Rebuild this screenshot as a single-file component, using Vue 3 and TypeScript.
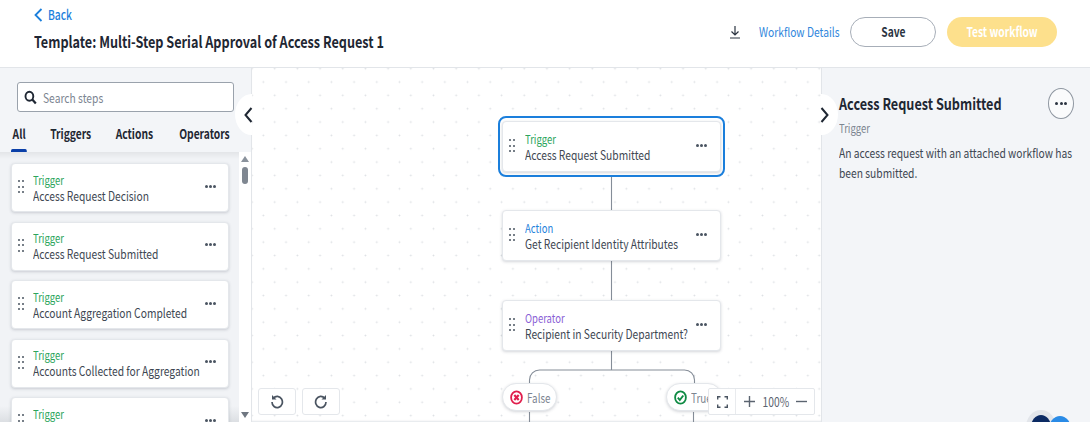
<template>
  <div class="page">
    <header class="topbar">
      <div class="title-block">
        <a class="back">
          <svg width="9" height="14" viewBox="0 0 9 14"><path d="M7.500 1 1.500 7l6 6" fill="none" stroke="#1b7fdc" stroke-width="1.800" /></svg>
          <span class="sq">Back</span>
        </a>
        <h1 class="sq">Template: Multi-Step Serial Approval of Access Request 1</h1>
      </div>
      <div class="top-actions">
        <svg class="download" width="12" height="13" viewBox="0 0 12 13"><path d="M6 0v8.500M2.500 5.500 6 9l3.500-3.500M1 12h10" fill="none" stroke="#2b3441" stroke-width="1.200" /></svg>
        <a class="details sq">Workflow Details</a>
        <button class="btn-save"><span class="sq-c">Save</span></button>
        <button class="btn-test"><span class="sq-c">Test workflow</span></button>
      </div>
    </header>

    <main class="workspace">
      <aside class="steps">
        <div class="steps-head">
          <div class="search">
            <svg width="13" height="15" viewBox="0 0 13 15"><ellipse cx="5.400" cy="6.200" rx="3.900" ry="4.500" fill="none" stroke="#1f2733" stroke-width="1.900" /><path d="m8.300 9.500 3.500 4" stroke="#1f2733" stroke-width="2.200" /></svg>
            <span class="sq">Search steps</span>
          </div>
          <nav class="tabs">
            <span v-for="tab in tabs" :key="tab" class="tab" :class="{ active: tab === 'All' }">{{ tab }}</span>
          </nav>
        </div>
        <div class="list-wrap">
          <div class="list">
            <div v-for="step in steps" :key="step" class="step-card">
              <span class="grip"><i v-for="n in 6" :key="n" /></span>
              <div class="card-text sq">
                <div class="kind trigger">Trigger</div>
                <div class="name">{{ step }}</div>
              </div>
              <span class="more"><i /><i /><i /></span>
            </div>
          </div>
          <div class="scrollbar">
            <span class="arrow up" />
            <span class="thumb" />
            <span class="arrow down" />
          </div>
        </div>
      </aside>

      <section class="canvas">
        <button class="toggle toggle-left">
          <svg width="9" height="16" viewBox="0 0 9 16"><path d="M7.500 1 1.500 8l6 7" fill="none" stroke="#1f2733" stroke-width="2" /></svg>
        </button>

        <svg class="wires" width="569" height="354" viewBox="0 0 569 354">
          <path d="M359.500 104V142M359.500 193V232M359.500 282V302M277.500 316V312a10 10 0 0 1 10-10H432.500a10 10 0 0 1 10 10V316M277.500 344V354M441.500 344V354" fill="none" stroke="#858d98" stroke-width="1.100" />
        </svg>

        <div class="selected-ring" />
        <div v-for="node in nodes" :key="node.name" class="step-card node" :style="{ top: node.top + 'px' }">
          <span class="grip"><i v-for="n in 6" :key="n" /></span>
          <div class="card-text sq">
            <div class="kind" :class="node.kind.toLowerCase()">{{ node.kind }}</div>
            <div class="name">{{ node.name }}</div>
          </div>
          <span class="more"><i /><i /><i /></span>
        </div>

        <div class="pill pill-false">
          <svg width="13" height="15" viewBox="0 0 13 15"><ellipse cx="6.500" cy="7.500" rx="5.400" ry="6.200" fill="none" stroke="#e01e4c" stroke-width="1.800" /><path d="m4.300 5 4.400 5m0-5-4.400 5" stroke="#e01e4c" stroke-width="2.100" /></svg>
          <span class="sq">False</span>
        </div>
        <div class="pill pill-true">
          <svg width="13" height="15" viewBox="0 0 13 15"><ellipse cx="6.500" cy="7.500" rx="5.400" ry="6.200" fill="none" stroke="#0e8a43" stroke-width="1.800" /><path d="m3.800 7.700 2 2.300 3.500-4.500" fill="none" stroke="#0e8a43" stroke-width="1.900" /></svg>
          <span class="sq">True</span>
        </div>

        <div class="history">
          <button>
            <svg width="14" height="15" viewBox="0 0 14 15"><path d="M3.300 4.300A5.200 5.600 0 1 1 2 8" fill="none" stroke="#4a5461" stroke-width="1.700" /><path d="M2 1v4.500h4.500z" fill="#4a5461" /></svg>
          </button>
          <button>
            <svg width="14" height="15" viewBox="0 0 14 15"><path d="M10.700 4.300A5.200 5.600 0 1 0 12 8" fill="none" stroke="#4a5461" stroke-width="1.700" /><path d="M12 1v4.500H7.500z" fill="#4a5461" /></svg>
          </button>
        </div>

        <div class="zoom-bar">
          <span class="fit">
            <svg width="11" height="12" viewBox="0 0 11 12"><path d="M.7 3.500V.7h2.800M7.500.7h2.800v2.800M10.300 8.500v2.800H7.500M3.500 11.300H.7V8.500" fill="none" stroke="#4a5461" stroke-width="1.400" /></svg>
          </span>
          <span class="zoom-controls">
            <svg width="11" height="11" viewBox="0 0 11 11"><path d="M5.500 0v11M0 5.500h11" stroke="#5b6470" stroke-width="1.400" /></svg>
            <span class="pct sq-c">100%</span>
            <svg width="11" height="11" viewBox="0 0 11 11"><path d="M0 5.500h11" stroke="#5b6470" stroke-width="1.400" /></svg>
          </span>
        </div>
      </section>

      <aside class="inspector">
        <button class="toggle toggle-right">
          <svg width="9" height="16" viewBox="0 0 9 16"><path d="M1.500 1 7.500 8l-6 7" fill="none" stroke="#1f2733" stroke-width="2" /></svg>
        </button>
        <div class="inspector-head">
          <h2 class="sq">Access Request Submitted</h2>
          <span class="more-round"><i /><i /><i /></span>
        </div>
        <div class="sub sq">Trigger</div>
        <p class="sq">An access request with an attached workflow has been submitted.</p>
        <div class="chat">
          <span class="chat-dark" />
          <span class="chat-blue" />
        </div>
      </aside>
    </main>
  </div>
</template>

<script setup lang="ts">
const tabs: string[] = ['All', 'Triggers', 'Actions', 'Operators']

// last card is cut off by the window, only its label shows
const steps: string[] = [
  'Access Request Decision',
  'Access Request Submitted',
  'Account Aggregation Completed',
  'Accounts Collected for Aggregation',
  '',
]

const nodes = [
  { kind: 'Trigger', name: 'Access Request Submitted', top: 53 },
  { kind: 'Action', name: 'Get Recipient Identity Attributes', top: 142 },
  { kind: 'Operator', name: 'Recipient in Security Department?', top: 232 },
]
</script>

<style>
html,
body {
  margin: 0;
  overflow: hidden;
}
</style>

<style scoped>
.page {
  width: 1090px;
  height: 422px;
  display: flex;
  flex-direction: column;
  overflow: hidden;
  background: #fff;
  font-family: "Noto Sans CJK SC", "Noto Sans", sans-serif;
  color: #2b3441;
}
/* the design's type is narrow, squeeze it horizontally */
.sq {
  display: block;
  transform: scaleX(0.79);
  transform-origin: left center;
  white-space: nowrap;
}
.sq-c {
  display: inline-block;
  transform: scaleX(0.79);
  white-space: nowrap;
}
.topbar {
  height: 68px;
  flex: none;
  display: flex;
  justify-content: space-between;
  box-sizing: border-box;
  padding: 0 33px 0 34px;
  border-bottom: 1px solid #e2e5e9;
}
.title-block {
  padding-top: 6px;
}
.back {
  display: flex;
  align-items: center;
  gap: 5px;
  height: 17px;
  font-size: 13px;
  font-weight: 500;
  color: #1b7fdc;
}
h1 {
  margin: 7px 0 0;
  font-size: 16px;
  line-height: 22px;
  font-weight: 700;
  color: #1f2733;
}
.top-actions {
  display: flex;
  align-items: center;
  height: 64px;
}
.download {
  margin-right: 18px;
}
.details {
  width: 80px;
  font-size: 13px;
  line-height: 17px;
  margin-top: -2px;
  color: #2f86dc;
  margin-right: 11px;
}
.btn-save,
.btn-test {
  height: 30px;
  border-radius: 15px;
  font: inherit;
  font-size: 13px;
  font-weight: 700;
  padding: 0 0 2px;
}
.btn-save {
  width: 86px;
  background: #fff;
  border: 1px solid #a7aeb8;
  color: #2b3441;
  margin-right: 11px;
}
.btn-test {
  width: 110px;
  background: #fde08c;
  border: 0;
  color: #fff;
}
.workspace {
  flex: 1;
  min-height: 0;
  display: flex;
}
.steps {
  width: 252px;
  flex: none;
  display: flex;
  flex-direction: column;
  background: #f3f5f8;
  border-right: 1px solid #e2e5e9;
  box-sizing: border-box;
}
.steps-head {
  padding: 14px 0 0 11px;
  flex: none;
}
.search {
  width: 217px;
  height: 30px;
  margin-left: 6px;
  box-sizing: border-box;
  display: flex;
  align-items: center;
  gap: 6px;
  padding-left: 6px;
  background: #fff;
  border: 1px solid #9aa2ac;
  border-radius: 3px;
  font-size: 13px;
  color: #7c8591;
}
.tabs {
  display: flex;
  margin-top: 14px;
  height: 26px;
  font-size: 13px;
  font-weight: 700;
  color: #1f2733;
  transform: scaleX(0.79);
  transform-origin: left center;
}
.tab {
  position: relative;
  margin-left: 31px;
  line-height: 16px;
}
.tab:first-child {
  margin-left: 2px;
}
.tab:last-child {
  margin-left: 33px;
}
.tab.active::after {
  content: "";
  position: absolute;
  left: -2px;
  bottom: 0;
  width: 20px;
  height: 3px;
  border-radius: 2px 2px 0 0;
  background: #0a3fa8;
}
.list-wrap {
  flex: 1;
  min-height: 0;
  display: flex;
  overflow: hidden;
  background: linear-gradient(#e3e5e8, #f1f3f6 7px, #f1f3f6 calc(100% - 16px), #dcdfe3);
}
.list {
  flex: 1;
  min-width: 0;
  padding: 11px 10px 0 11px;
  display: flex;
  flex-direction: column;
  gap: 9.500px;
}
.step-card {
  flex: none;
  display: flex;
  align-items: center;
  height: 49px;
  box-sizing: border-box;
  padding: 0 12px 0 6px;
  background: #fff;
  border: 1px solid #e4e7eb;
  border-radius: 4px;
  box-shadow: 0 1px 3px rgba(60, 70, 85, 0.22);
}
.grip {
  flex: none;
  display: grid;
  grid-template-columns: 2px 2px;
  gap: 3.500px 1.500px;
  margin-right: 9px;
  margin-top: -2px;
}
.grip i {
  width: 2px;
  height: 2px;
  background: #4a5461;
  border-radius: 50%;
}
.card-text {
  flex: 1;
  min-width: 0;
}
.kind {
  font-size: 12px;
  line-height: 15px;
}
.trigger {
  color: #2ca55c;
}
.action {
  color: #1f82db;
}
.operator {
  color: #8a5fd6;
}
.name {
  min-height: 17px;
  font-size: 13px;
  line-height: 17px;
  color: #3e4752;
}
.more {
  flex: none;
  display: flex;
  gap: 1px;
  margin-top: -3px;
}
.more i {
  width: 3px;
  height: 3px;
  border-radius: 50%;
  background: #4a5461;
}
.scrollbar {
  width: 12px;
  flex: none;
  position: relative;
  background: #fff;
}
.thumb {
  position: absolute;
  top: 15px;
  left: 3px;
  width: 6px;
  height: 17px;
  border-radius: 3px;
  background: #7f8791;
}
.arrow {
  position: absolute;
  left: 2px;
  width: 0;
  height: 0;
  border-left: 4px solid transparent;
  border-right: 4px solid transparent;
}
.arrow.up {
  top: 4px;
  border-bottom: 6px solid #8a929c;
}
.arrow.down {
  bottom: 4px;
  border-top: 6px solid #6f7781;
}
.canvas {
  flex: 1;
  position: relative;
  min-width: 0;
  background-color: #fff;
  background-image: radial-gradient(circle, #dde0e4 0.8px, transparent 1.1px), radial-gradient(circle, #dde0e4 0.8px, transparent 1.1px);
  background-size: 22.7px 26.7px;
  background-position: 0 0.7px, 11.35px 14px;
  box-shadow: inset 0 -2px 2px -1px #e2e5e9;
}
.toggle {
  position: absolute;
  top: 26px;
  width: 17px;
  height: 41px;
  padding: 0;
  border: 0;
  background: #fff;
  display: flex;
  align-items: center;
  z-index: 2;
}
.toggle-left {
  left: -17px;
  justify-content: flex-end;
  border-radius: 17px 0 0 17px / 21px 0 0 21px;
}
.toggle-left svg {
  margin-right: -1px;
}
.toggle-right {
  left: -1px;
  justify-content: flex-start;
  border-radius: 0 17px 17px 0 / 0 21px 21px 0;
}
.toggle-right svg {
  margin-left: -1px;
}
.wires {
  position: absolute;
  left: 0;
  top: 0;
}
.node {
  position: absolute;
  left: 250px;
  width: 219px;
  height: 51px;
  padding-right: 13px;
}
.node .grip {
  margin-right: 10px;
}
.selected-ring {
  position: absolute;
  left: 246px;
  top: 48px;
  width: 227px;
  height: 61px;
  box-sizing: border-box;
  background: #fff;
  border: 2px solid #1b7fdc;
  border-radius: 8px;
}
.pill {
  position: absolute;
  top: 315px;
  height: 28px;
  box-sizing: border-box;
  display: flex;
  align-items: center;
  gap: 4px;
  padding-left: 7px;
  background: #fff;
  border: 1px solid #e4e7eb;
  border-radius: 14px;
  box-shadow: 0 1px 3px rgba(60, 70, 85, 0.22);
  font-size: 12.500px;
  color: #7c8591;
}
.pill svg {
  flex: none;
}
.pill-false {
  left: 250px;
  width: 55px;
}
.pill-true {
  left: 414px;
  width: 56px;
}
.history {
  position: absolute;
  left: 6px;
  top: 320px;
  display: flex;
  gap: 6px;
}
.history button {
  width: 38px;
  height: 27px;
  padding: 0;
  display: flex;
  align-items: center;
  justify-content: center;
  background: #fff;
  border: 1px solid #e4e7eb;
  border-radius: 3px;
}
.zoom-bar {
  position: absolute;
  left: 456px;
  top: 320px;
  width: 107px;
  height: 27px;
  box-sizing: border-box;
  display: flex;
  align-items: center;
  background: #fff;
  border: 1px solid #e4e7eb;
  border-radius: 2px;
  z-index: 1;
}
.fit {
  width: 26px;
  height: 100%;
  flex: none;
  display: flex;
  align-items: center;
  justify-content: center;
  border-right: 1px solid #e9ebee;
}
.zoom-controls {
  flex: 1;
  display: flex;
  align-items: center;
  justify-content: space-between;
  padding: 0 7px 0 8px;
}
.pct {
  font-size: 13px;
  color: #5b6470;
}
.inspector {
  width: 269px;
  flex: none;
  position: relative;
  box-sizing: border-box;
  padding: 20px 16px 0 17px;
  background: #f3f5f8;
  border-left: 1px solid #e2e5e9;
}
.inspector-head {
  display: flex;
  align-items: center;
  justify-content: space-between;
  height: 30px;
}
h2 {
  margin: 0;
  flex: 1;
  min-width: 0;
  font-size: 16px;
  font-weight: 700;
  color: #1f2733;
}
.more-round {
  width: 26px;
  height: 31px;
  flex: none;
  box-sizing: border-box;
  display: flex;
  align-items: center;
  justify-content: center;
  gap: 1.500px;
  border: 1px solid #8f97a1;
  border-radius: 50%;
  background: #fafbfc;
}
.more-round i {
  width: 3px;
  height: 3px;
  border-radius: 50%;
  background: #2b3441;
}
.sub {
  margin-top: 2px;
  font-size: 12px;
  line-height: 16px;
  color: #7c8591;
}
p {
  width: 295px;
  margin: 7px 0 0;
  font-size: 13px;
  line-height: 20px;
  color: #3e4752;
}
p.sq {
  white-space: normal;
}
.chat {
  position: absolute;
  left: 206px;
  top: 345px;
  width: 50px;
  height: 24px;
}
.chat-dark {
  position: absolute;
  left: 3px;
  top: 2px;
  width: 20px;
  height: 24px;
  border-radius: 50%;
  background: #0b2a63;
  box-shadow: 0 0 0 5px rgba(200, 205, 212, 0.4);
}
.chat-blue {
  position: absolute;
  left: 21px;
  top: 3px;
  width: 22px;
  height: 26px;
  border-radius: 50%;
  background: #2a8be6;
}
</style>
